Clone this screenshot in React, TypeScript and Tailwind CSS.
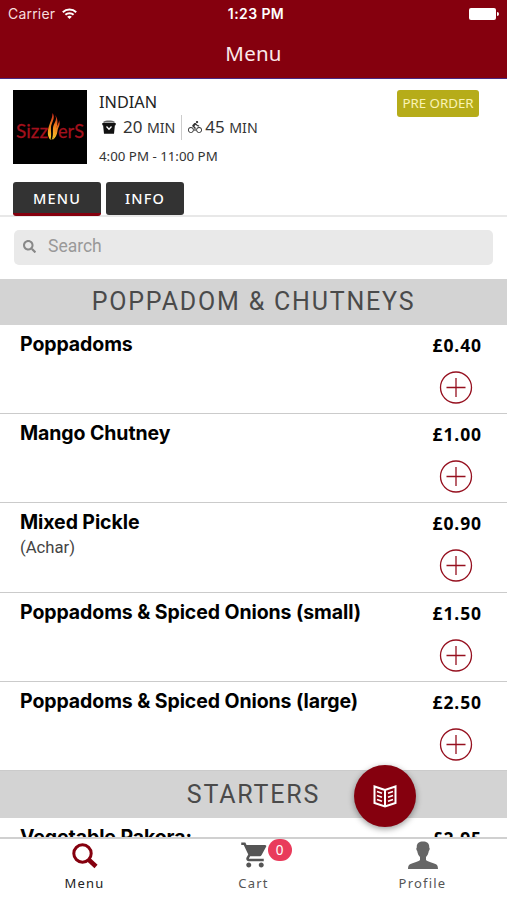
import { FaSearch } from "react-icons/fa";
import { MdDirectionsBike, MdShoppingCart } from "react-icons/md";

interface MenuItem {
  name: string;
  note?: string;
  price: string;
}

const poppadoms: MenuItem[] = [
  { name: "Poppadoms", price: "£0.40" },
  { name: "Mango Chutney", price: "£1.00" },
  { name: "Mixed Pickle", note: "(Achar)", price: "£0.90" },
  { name: "Poppadoms & Spiced Onions (small)", price: "£1.50" },
  { name: "Poppadoms & Spiced Onions (large)", price: "£2.50" },
];

const starters: MenuItem[] = [{ name: "Vegetable Pakora:", price: "£2.95" }];

function StatusBar() {
  return (
    <div className="grid grid-cols-3 items-center h-[27px] px-2 text-white text-[14px] font-['Inter',sans-serif]">
      <div className="flex items-center gap-[7px]">
        <span className="text-[14px] tracking-[0.2px] text-[#f6dede]">Carrier</span>
        <svg className="w-[15px] h-[12px]" viewBox="0 0 15 12" fill="none" stroke="#fff" strokeWidth="2">
          <path d="M.8 4.2C4.5.6 10.500.6 14.200 4.200" />
          <path d="M3.400 6.800c2.300-2.200 5.900-2.200 8.200 0" />
          <path d="M5.200 8.700c1.300-1.200 3.300-1.200 4.600 0L7.500 11z" fill="#fff" stroke="none" />
        </svg>
      </div>
      <div className="text-center font-semibold text-[14px] tracking-[0.4px] pl-[5px]">1:23 PM</div>
      <div className="flex justify-end items-center gap-px">
        <div className="w-[27px] h-[12px] bg-white rounded-[2px]" />
        <div className="w-[2px] h-[4px] bg-white rounded-r-full" />
      </div>
    </div>
  );
}

function Logo() {
  return (
    <svg className="w-[74px] h-[74px] bg-black shrink-0" viewBox="0 0 74 74">
      <defs>
        <linearGradient id="flame" x1="0" y1="0" x2="0" y2="1">
          <stop offset="0" stopColor="#c8201a" />
          <stop offset=".4" stopColor="#ee7a1c" />
          <stop offset="1" stopColor="#f9d02c" />
        </linearGradient>
      </defs>
      <g fill="#a3101c" stroke="#a3101c" strokeWidth=".3" fontFamily="'Lato', sans-serif" fontSize="19">
        <text x="3" y="48" textLength="32" lengthAdjust="spacingAndGlyphs">Sizz</text>
        <text x="45" y="48" textLength="26" lengthAdjust="spacingAndGlyphs">erS</text>
      </g>
      <g fill="url(#flame)" transform="translate(-1 0)">
        <path d="M40.500 23c3.500 5-1 9-1.500 14-.3 5 .8 8-.5 13-3.500-4-3-9-1.500-14 1.500-5 3.500-8 3.500-13z" />
        <path d="M43 25c3 5-1.500 8-2 13-.3 5 .5 8-1.500 12 4-3 4-7 5-12 1-4 2-9-1.500-13z" />
        <path d="M47 30c2 5-1 7-1.500 11s-2 7-5 9c2-4 2-6 3-10 .8-4 3.500-6 3.500-10z" />
      </g>
    </svg>
  );
}

function BucketIcon() {
  return (
    <svg className="w-[14px] h-[14px]" viewBox="0 0 14 14">
      <path d="M1.500 3.500V1.500C3 0 11 0 12.500 1.500v2z" fill="#666" />
      <path d="M.3 3h13.400v2.200h-.8L12 13.700H2L1.100 5.200H.3z" fill="#111" />
      <path d="M2.500 2.500h9" stroke="#bbb" strokeWidth=".8" />
      <path d="M4.500 6.500L7 9.300l2.500-2.800" fill="none" stroke="#fff" strokeWidth="1.300" />
    </svg>
  );
}

function RestaurantHeader() {
  return (
    <div className="flex h-[103px] pt-[11px] pl-[13px] pr-7 gap-3">
      <Logo />
      <div className="flex-1 text-[#333]">
        <div className="text-[16.300px] leading-[24px] text-[#222]">INDIAN</div>
        <div className="flex items-center h-[26px] text-[17px] whitespace-nowrap">
          <div className="flex items-center pl-[3px] gap-[7px]">
            <BucketIcon />
            <span>20 <span className="text-[14.200px]">MIN</span></span>
          </div>
          <div className="w-px h-[25px] bg-[#ccc] ml-[6px] mr-[6px]" />
          <MdDirectionsBike className="w-[14px] h-[14px]" />
          <span className="pl-[3px]">45 <span className="text-[14.200px]">MIN</span></span>
        </div>
        <div className="text-[13.300px] leading-[32px]">4:00 PM - 11:00 PM</div>
      </div>
      <div className="w-[82px] h-[27px] rounded-[3px] bg-[#b6ac19] text-[#faf3b4] text-[13.300px] leading-[27px] text-center whitespace-nowrap">
        PRE ORDER
      </div>
    </div>
  );
}

function SectionTitle({ title, className }: { title: string; className: string }) {
  return (
    <div className={`${className} shrink-0 bg-[#d3d3d3] text-[#4a4a4a] text-center text-[25px] tracking-[1.800px] font-['Roboto',sans-serif]`}>
      {title}
    </div>
  );
}

function MenuRow({ name, note, price }: MenuItem) {
  return (
    <div className="flex justify-between h-[89.200px] shrink-0 pl-5 pr-[26px] border-b border-[#cbcbcb]">
      <div className="pt-[5px] font-['Inter',sans-serif]">
        <div className="text-[19.500px] leading-[28px] font-bold tracking-[-0.090px] text-black">{name}</div>
        {note && <div className="text-[16.700px] leading-[23px] text-[#444] font-['Roboto',sans-serif]">{note}</div>}
      </div>
      <div className="flex flex-col items-center">
        <div className="pt-[8px] text-[17.500px] leading-[24px] font-bold text-black tracking-[0.900px] -mr-px">{price}</div>
        <svg className="w-[34px] h-[34px] mt-[13px] mr-px" viewBox="0 0 34 34" fill="none" stroke="#96101f" strokeWidth="1.300">
          <circle cx="17" cy="17.500" r="15.500" />
          <path d="M17 8v19M7.500 17.500h19" />
        </svg>
      </div>
    </div>
  );
}

function TabBar() {
  return (
    <div className="grid grid-cols-3 h-[63px] shrink-0 border-t-2 border-[#d0d0d0] bg-white text-[13px] tracking-[1.200px] text-[#555]">
      <div className="flex flex-col items-center text-[#222]">
        <svg className="w-[26px] h-[26px] mt-[4px]" viewBox="0 0 26 26" fill="none" stroke="#85000e">
          <circle cx="10.500" cy="10.500" r="8.700" strokeWidth="3" />
          <path d="M16.500 16.500l7.500 7" strokeWidth="4.500" />
        </svg>
        <span className="leading-[28px]">Menu</span>
      </div>
      <div className="flex flex-col items-center">
        <div className="relative mt-[1px] ml-[2px] h-[29px]">
          <MdShoppingCart className="w-[30px] h-[30px] text-[#555]" />
          <span className="absolute -top-px left-[28px] w-[24px] h-[22px] rounded-full bg-[#e93b5b] text-white text-[13.500px] leading-[22px] text-center tracking-normal">
            0
          </span>
        </div>
        <span className="leading-[28px]">Cart</span>
      </div>
      <div className="flex flex-col items-center">
        <svg className="w-[30px] h-[29px] mt-[1px]" viewBox="0 0 30 29" fill="#666">
          <path d="M15 1.500c4 0 6.500 2 6.200 6 .8.300.6 2.500-.4 3.500-.4 2.500-1.300 4.500-2.800 6v3c2 2 7 2.700 10 4.200 1.600.8 2 2.800 2 5.300H0c0-2.500.4-4.500 2-5.300 3-1.500 8-2.200 10-4.200v-3c-1.500-1.500-2.400-3.500-2.800-6-1-1-1.200-3.200-.4-3.500-.3-4 2.200-6 6.200-6z" />
        </svg>
        <span className="leading-[28px]">Profile</span>
      </div>
    </div>
  );
}

export default function App() {
  return (
    <div className="relative flex flex-col w-[507px] h-[900px] overflow-hidden bg-white font-['Noto_Sans',sans-serif]">
      <div className="h-[79px] shrink-0 bg-[#85000e] border-b border-[#4a2a80]">
        <StatusBar />
        <div className="text-center text-[#fbe9e9] text-[20.500px] leading-[53px] tracking-[0.200px]">Menu</div>
      </div>
      <RestaurantHeader />
      <div className="flex gap-[5px] h-[35px] shrink-0 pl-[13px] border-b-2 border-[#e8e8e8] text-white text-[14.500px] font-medium tracking-[1.200px] text-center">
        <div className="w-[88px] h-[34px] rounded-[3px] bg-[#333] border-b-3 border-[#85000e] leading-[33px]">MENU</div>
        <div className="w-[78px] h-[33px] rounded-[3px] bg-[#333] leading-[33px]">INFO</div>
      </div>
      <div className="flex items-center h-[35px] shrink-0 mt-[13px] mb-[14px] mx-[14px] px-[9px] gap-[12px] rounded-[5px] bg-[#e9e9e9] text-[#999]">
        <FaSearch className="w-[13px] h-[13px] text-[#888] mb-[2px]" />
        <span className="text-[17.500px] leading-[30px] pb-[4px] font-['Roboto',sans-serif]">Search</span>
      </div>
      <div className="flex flex-col flex-1 min-h-0 overflow-hidden">
        <SectionTitle title="POPPADOM & CHUTNEYS" className="h-[46px] leading-[46px]" />
        {poppadoms.map((item) => (
          <MenuRow key={item.name} {...item} />
        ))}
        <SectionTitle title="STARTERS" className="h-[47px] leading-[47px]" />
        {starters.map((item) => (
          <MenuRow key={item.name} {...item} />
        ))}
      </div>
      <TabBar />
      <button className="absolute left-[354px] top-[765px] w-[62px] h-[62px] rounded-full bg-[#85000e] flex items-center justify-center shadow-[0_2px_6px_rgba(0,0,0,0.4)]">
        <svg className="w-[24px] h-[24px]" viewBox="0 0 24 24" fill="none" stroke="#fff" strokeWidth="2">
          <path d="M12 6L1.500 2.500v16.500L12 22.500 22.500 19V2.500zM12 6v16.500" />
          <path d="M4 7.500l5 1.700M4 11.500l5 1.700M4 15.500l5 1.700M20 7.500l-5 1.700M20 11.500l-5 1.700M20 15.500l-5 1.700" strokeWidth="1.700" />
        </svg>
      </button>
    </div>
  );
}
